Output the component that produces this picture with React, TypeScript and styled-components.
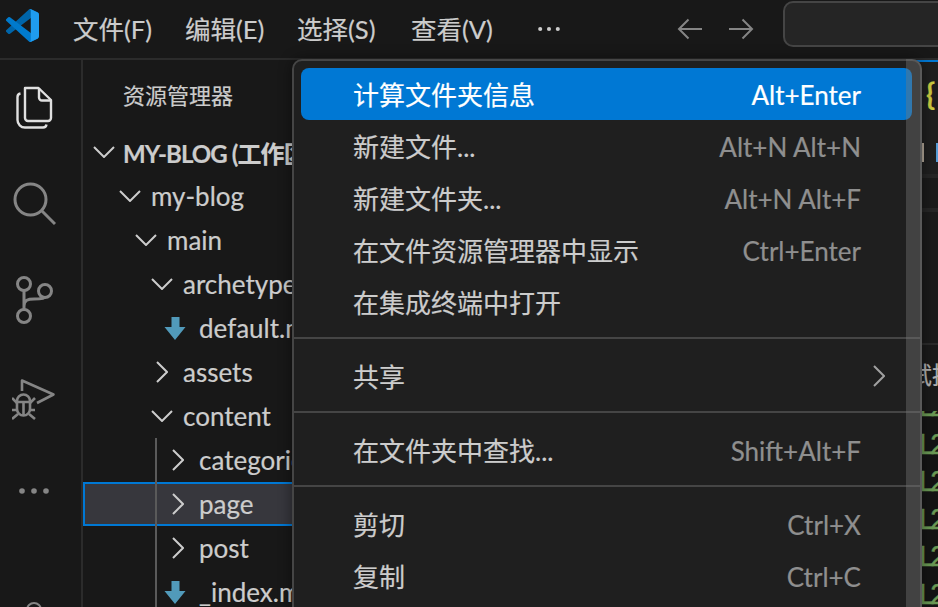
import React from "react";
import styled, { createGlobalStyle } from "styled-components";

const UI = `Lato, "Noto Sans CJK SC", sans-serif`;
const MONO = `"Liberation Mono", "DejaVu Sans Mono", monospace`;

const Global = createGlobalStyle`
  html, body { margin: 0; padding: 0; height: 100%; background: #181818; overflow: hidden; }
  #root { height: 100%; }
`;

const Page = styled.div`
  position: relative;
  width: 938px;
  height: 607px;
  overflow: hidden;
  display: flex;
  flex-direction: column;
  background: #181818;
  color: #cccccc;
  font-family: ${UI};
  font-size: 26px;
  -webkit-text-stroke: 0.2px currentColor;
`;

const TitleBar = styled.header`
  flex: none;
  height: 58px;
  display: flex;
  align-items: center;
  border-bottom: 2px solid #2b2b2b;
  background: #181818;
  overflow: hidden;
`;

const LogoSlot = styled.div`
  width: 73px;
  flex: none;
  display: flex;
  padding-left: 6px;
  box-sizing: border-box;
`;

const MenuBarItem = styled.span<{ $w: number }>`
  width: ${(p) => p.$w}px;
  flex: none;
  white-space: nowrap;
  color: #cccccc;
  font-size: 25.5px;
  padding-bottom: 4px;
`;

const NavIcons = styled.div`
  display: flex;
  gap: 27px;
  margin-left: 117px;
  flex: none;
`;

const SearchBox = styled.div`
  flex: none;
  width: 200px;
  height: 46px;
  margin: -10px 0 0 29px;
  box-sizing: border-box;
  border: 2px solid #454545;
  border-radius: 10px;
  background: #252525;
`;

const Body = styled.div`
  flex: 1;
  min-height: 0;
  display: flex;
`;

const ActivityBar = styled.nav`
  flex: none;
  width: 83px;
  box-sizing: border-box;
  border-right: 2px solid #2b2b2b;
  display: flex;
  flex-direction: column;
  align-items: center;
  padding-right: 13px;
  padding-top: 25px;
  overflow: hidden;
`;

const ActivitySlot = styled.div<{ $h: number }>`
  height: ${(p) => p.$h}px;
  flex: none;
  display: flex;
  justify-content: center;
`;

const Sidebar = styled.aside`
  flex: none;
  width: 240px;
  overflow: hidden;
  display: flex;
  flex-direction: column;
`;

const SidebarTitle = styled.div`
  flex: none;
  height: 70px;
  padding: 13px 0 0 40px;
  box-sizing: border-box;
  line-height: 46px;
  font-size: 22px;
  color: #cccccc;
  white-space: nowrap;
`;

const Row = styled.div<{ $pad: number; $selected?: boolean; $root?: boolean }>`
  flex: none;
  height: 44px;
  box-sizing: border-box;
  display: flex;
  align-items: center;
  position: relative;
  padding-left: ${(p) => p.$pad}px;
  white-space: nowrap;
  font-weight: ${(p) => (p.$root ? 700 : 400)};
  font-size: ${(p) => (p.$root ? "24px" : "26px")};
  letter-spacing: ${(p) => (p.$root ? "-0.9px" : "0")};
  color: #cccccc;
  background: ${(p) => (p.$selected ? "#37373d" : "transparent")};
  outline: ${(p) => (p.$selected ? "2px solid #0078d4" : "none")};
  outline-offset: -2px;
`;

const Twist = styled.span<{ $w: number }>`
  width: ${(p) => p.$w}px;
  flex: none;
  display: flex;
  align-items: center;
`;

const Group = styled.div`
  flex: none;
  position: relative;
  &::after {
    content: "";
    position: absolute;
    left: 72px;
    top: 0;
    bottom: 0;
    width: 2px;
    background: #5a5a5a;
  }
`;

const Editor = styled.main`
  flex: 1;
  min-width: 0;
  overflow: hidden;
  display: flex;
  flex-direction: column;
  white-space: nowrap;
`;

const TabStrip = styled.div`
  flex: none;
  height: 64px;
  box-sizing: border-box;
  border-top: 2px solid #0078d4;
  background: #1f1f1f;
  padding-left: 603px;
  padding-top: 11px;
  font-weight: 700;
  font-size: 30px;
  line-height: 40px;
  color: #cbcb41;
`;

const Crumbs = styled.div`
  flex: none;
  height: 50px;
  background: #1f1f1f;
  display: flex;
  align-items: flex-start;
  gap: 12px;
  padding: 19px 0 0 599px;
  box-sizing: border-box;
`;

const CrumbMark = styled.span<{ $c: string }>`
  width: 2px;
  height: 19px;
  flex: none;
  background: ${(p) => p.$c};
`;

const EditorLine = styled.div`
  flex: none;
  height: 34px;
  box-sizing: border-box;
  border-top: 4px solid #262626;
  background: #1b1b1b;
`;

const Gutter = styled.div`
  flex: none;
  height: 135px;
  box-sizing: border-box;
  border-top: 4px solid #262626;
  background: #1b1b1b;
`;

const PanelTabs = styled.div`
  flex: none;
  height: 68px;
  box-sizing: border-box;
  border-top: 2px solid #2b2b2b;
  padding: 11px 0 0 561px;
  line-height: 38px;
  font-size: 24px;
  color: #b0b0b0;
  background: #1a1a1a;
`;

const Terminal = styled.div`
  flex: 1;
  min-height: 0;
  overflow: hidden;
  background: #141414;
  padding-left: 595px;
  font-family: ${MONO};
  font-size: 29px;
  letter-spacing: -6px;
  line-height: 37.5px;
  color: #6a9955;
  -webkit-text-stroke: 0.4px #6a9955;
`;

const TerminalLines = styled.div`
  margin-top: -21px;
`;

const ContextMenu = styled.div`
  position: absolute;
  left: 292px;
  top: 59px;
  width: 630px;
  height: 600px;
  box-sizing: border-box;
  border: 2px solid #454545;
  border-radius: 10px;
  background: #1f1f1f;
  padding-top: 7px;
  box-shadow: 0 0 14px rgba(0, 0, 0, 0.45);
`;

const MenuRow = styled.div<{ $active?: boolean; $submenu?: boolean }>`
  height: 52px;
  margin: 0 8px 0 7px;
  padding: 0 ${(p) => (p.$submenu ? 27 : 51)}px 0 52px;
  box-sizing: border-box;
  display: flex;
  align-items: center;
  justify-content: space-between;
  border-radius: 8px;
  white-space: nowrap;
  color: ${(p) => (p.$active ? "#ffffff" : "#cccccc")};
  background: ${(p) => (p.$active ? "#0078d4" : "transparent")};
`;

const MenuLabel = styled.span`
  padding-bottom: 2px;
`;

const Shortcut = styled.span<{ $active?: boolean }>`
  padding-top: 2px;
  color: ${(p) => (p.$active ? "#ffffff" : "#8f8f8f")};
`;

const Separator = styled.div`
  height: 2px;
  margin: 9px 0 11px;
  background: #454545;
`;

const MenuScrollbar = styled.div`
  position: absolute;
  top: -2px;
  right: -2px;
  bottom: 0;
  width: 16px;
  border-top-right-radius: 10px;
  background: rgba(121, 121, 121, 0.4);
`;

const AccountArc = styled.div`
  flex: none;
  margin-top: 108px;
  width: 16px;
  height: 16px;
  box-sizing: border-box;
  border: 2px solid #858585;
  border-radius: 50%;
`;

const Logo = () => (
  <svg width="33" height="33" viewBox="0 0 100 100" style={{ marginTop: -8 }}>
    <path d="M96.461 10.796L75.857.876a6.23 6.23 0 0 0-7.107 1.207l-67.451 61.5a4.167 4.167 0 0 0 .004 6.162l5.51 5.009a4.167 4.167 0 0 0 5.32.236l81.228-61.62c2.725-2.067 6.639-.124 6.639 3.297v-.24a6.25 6.25 0 0 0-3.539-5.63z" fill="#0065A9" />
    <path d="M96.461 89.204l-20.604 9.92a6.229 6.229 0 0 1-7.107-1.207l-67.451-61.5a4.167 4.167 0 0 1 .004-6.162l5.51-5.009a4.167 4.167 0 0 1 5.32-.236l81.228 61.62c2.725 2.067 6.639.124 6.639-3.297v.24a6.25 6.25 0 0 1-3.539 5.63z" fill="#007ACC" />
    <path d="M75.858 99.126a6.232 6.232 0 0 1-7.108-1.21c2.306 2.307 6.25.674 6.25-2.588V4.672c0-3.262-3.944-4.895-6.25-2.589a6.232 6.232 0 0 1 7.108-1.21l20.6 9.908A6.25 6.25 0 0 1 100 16.413v67.174a6.25 6.25 0 0 1-3.541 5.633l-20.601 9.906z" fill="#1F9CF0" />
  </svg>
);

const Dots = ({ c, w }: { c: string; w: number }) => (
  <svg width={w} height="6" viewBox="0 0 30 6" style={{ display: "block", flex: "none" }}>
    <circle cx="3" cy="3" r="2.8" fill={c} />
    <circle cx="15" cy="3" r="2.8" fill={c} />
    <circle cx="27" cy="3" r="2.8" fill={c} />
  </svg>
);

const Arrow = ({ flip }: { flip?: boolean }) => (
  <svg width="25" height="22" viewBox="0 0 25 22" fill="none" stroke="#858585" strokeWidth="2" style={{ transform: flip ? "scaleX(-1)" : undefined, display: "block" }}>
    <path d="M25 11H2M11.5 1.5L2 11l9.5 9.5" />
  </svg>
);

const ChevDown = () => (
  <svg width="22" height="12" viewBox="0 0 22 12" fill="none" stroke="#cccccc" strokeWidth="2" style={{ display: "block" }}>
    <path d="M1 1l10 10L21 1" />
  </svg>
);

const ChevRight = ({ c = "#cccccc" }: { c?: string }) => (
  <svg width="12" height="22" viewBox="0 0 12 22" fill="none" stroke={c} strokeWidth="2" style={{ display: "block" }}>
    <path d="M1 1l10 10L1 21" />
  </svg>
);

const MdIcon = () => (
  <svg width="22" height="23" viewBox="0 0 22 23" style={{ display: "block" }}>
    <path d="M7.5 0h8v10H21.5L11 23 .5 10H7.5z" fill="#519aba" />
  </svg>
);

const FilesIcon = () => (
  <svg width="38" height="44" viewBox="0 0 38 44" fill="none" stroke="#e0e0e0" strokeWidth="2.4">
    <path d="M10 3h13.5L36 15v18a3 3 0 0 1-3 3H13a3 3 0 0 1-3-3z" strokeLinejoin="round" />
    <path d="M24 3v9.5a3 3 0 0 0 3 3h9" />
    <path d="M5.5 8.5A3.6 3.6 0 0 0 2.5 12v23a7.5 7.5 0 0 0 7.5 7.5h18a3.5 3.5 0 0 0 3.5-3" />
  </svg>
);

const SearchIcon = () => (
  <svg width="44" height="44" viewBox="0 0 44 44" fill="none" stroke="#858585" strokeWidth="3">
    <circle cx="18.5" cy="17.5" r="15.5" />
    <path d="M29.5 28.5L43 42" />
  </svg>
);

const BranchIcon = () => (
  <svg width="38" height="48" viewBox="0 0 38 48" fill="none" stroke="#858585" strokeWidth="3">
    <circle cx="9" cy="8" r="6.5" />
    <circle cx="9" cy="40" r="6.5" />
    <circle cx="30" cy="15" r="6.5" />
    <path d="M9 14.5v19M9 30c0-6 4-7 10-7 6 0 11-1 11-2" />
  </svg>
);

const DebugIcon = () => (
  <svg width="44" height="44" viewBox="0 0 44 44" fill="none" stroke="#858585" strokeWidth="2.6">
    <path d="M10 14V3.5L41.5 17.5 25 26" strokeLinejoin="round" />
    <path d="M5 24a6.5 6.5 0 0 1 13 0" />
    <path d="M5 25h13v7a6.5 6.5 0 0 1-13 0z" />
    <path d="M11.5 25v13M0 21l5 5M23 21l-5 5M0 33h5M23 33h-5M0 42l6-5M23 42l-6-5" />
  </svg>
);

const menuBar: [string, number][] = [
  ["文件(F)", 112],
  ["编辑(E)", 112],
  ["选择(S)", 114],
  ["查看(V)", 127],
];

const Down = () => (
  <Twist $w={32}>
    <ChevDown />
  </Twist>
);
const Right = () => (
  <Twist $w={27}>
    <ChevRight />
  </Twist>
);
const Md = () => (
  <Twist $w={35}>
    <MdIcon />
  </Twist>
);

export default function App() {
  return (
    <Page>
      <Global />
      <TitleBar>
        <LogoSlot>
          <Logo />
        </LogoSlot>
        {menuBar.map(([t, w]) => (
          <MenuBarItem key={t} $w={w}>
            {t}
          </MenuBarItem>
        ))}
        <Dots c="#cccccc" w={22} />
        <NavIcons>
          <Arrow />
          <Arrow flip />
        </NavIcons>
        <SearchBox />
      </TitleBar>
      <Body>
        <ActivityBar>
          <ActivitySlot $h={97}>
            <FilesIcon />
          </ActivitySlot>
          <ActivitySlot $h={94}>
            <SearchIcon />
          </ActivitySlot>
          <ActivitySlot $h={101}>
            <BranchIcon />
          </ActivitySlot>
          <ActivitySlot $h={111}>
            <DebugIcon />
          </ActivitySlot>
          <Dots c="#858585" w={30} />
          <AccountArc />
        </ActivityBar>
        <Sidebar>
          <SidebarTitle>资源管理器</SidebarTitle>
          <Row $pad={10} $root>
            <Twist $w={30}>
              <ChevDown />
            </Twist>
            MY-BLOG (工作区)
          </Row>
          <Row $pad={36}>
            <Down />
            my-blog
          </Row>
          <Row $pad={52}>
            <Down />
            main
          </Row>
          <Row $pad={68}>
            <Down />
            archetypes
          </Row>
          <Row $pad={81}>
            <Md />
            default.md
          </Row>
          <Row $pad={73}>
            <Right />
            assets
          </Row>
          <Row $pad={68}>
            <Down />
            content
          </Row>
          <Group>
            <Row $pad={89}>
              <Right />
              categories
            </Row>
            <Row $pad={89} $selected>
              <Right />
              page
            </Row>
            <Row $pad={89}>
              <Right />
              post
            </Row>
            <Row $pad={81}>
              <Md />
              _index.md
            </Row>
          </Group>
        </Sidebar>
        <Editor>
          <TabStrip>{"{ }"}</TabStrip>
          <Crumbs>
            <CrumbMark $c="#b5a99a" />
            <CrumbMark $c="#569cd6" />
          </Crumbs>
          <EditorLine />
          <Gutter />
          <PanelTabs>调试控制台</PanelTabs>
          <Terminal>
            <TerminalLines>
              <div>L2</div>
              <div>L2</div>
              <div>L2</div>
              <div>L2</div>
              <div>L2</div>
              <div>L2</div>
            </TerminalLines>
          </Terminal>
        </Editor>
      </Body>
      <ContextMenu>
        <MenuRow $active>
          <MenuLabel>计算文件夹信息</MenuLabel>
          <Shortcut $active>Alt+Enter</Shortcut>
        </MenuRow>
        <MenuRow>
          <MenuLabel>新建文件...</MenuLabel>
          <Shortcut>Alt+N Alt+N</Shortcut>
        </MenuRow>
        <MenuRow>
          <MenuLabel>新建文件夹...</MenuLabel>
          <Shortcut>Alt+N Alt+F</Shortcut>
        </MenuRow>
        <MenuRow>
          <MenuLabel>在文件资源管理器中显示</MenuLabel>
          <Shortcut>Ctrl+Enter</Shortcut>
        </MenuRow>
        <MenuRow>
          <MenuLabel>在集成终端中打开</MenuLabel>
        </MenuRow>
        <Separator />
        <MenuRow $submenu>
          <MenuLabel>共享</MenuLabel>
          <ChevRight c="#a0a0a0" />
        </MenuRow>
        <Separator />
        <MenuRow>
          <MenuLabel>在文件夹中查找...</MenuLabel>
          <Shortcut>Shift+Alt+F</Shortcut>
        </MenuRow>
        <Separator />
        <MenuRow>
          <MenuLabel>剪切</MenuLabel>
          <Shortcut>Ctrl+X</Shortcut>
        </MenuRow>
        <MenuRow>
          <MenuLabel>复制</MenuLabel>
          <Shortcut>Ctrl+C</Shortcut>
        </MenuRow>
        <MenuScrollbar />
      </ContextMenu>
    </Page>
  );
}
